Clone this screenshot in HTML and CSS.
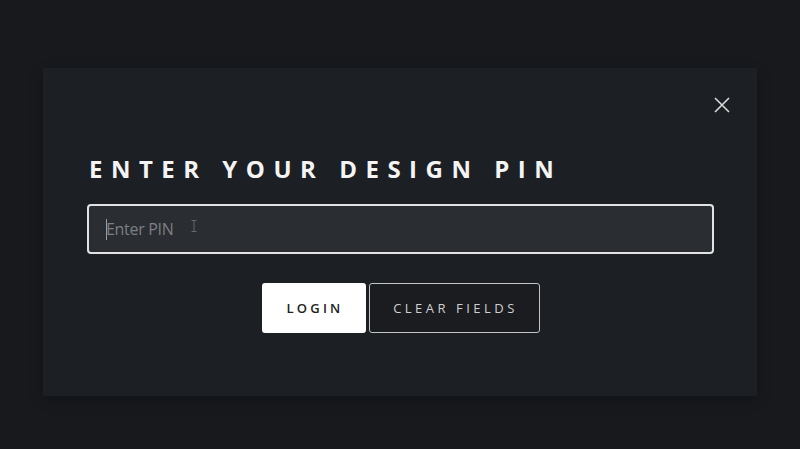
FILE: index.html
```html
<!DOCTYPE html>
<html lang="en">
<head>
<meta charset="UTF-8">
<meta name="viewport" content="width=device-width, initial-scale=1.0">
<title>Design PIN</title>
<link rel="stylesheet" href="styles.css">
</head>
<body>
<div class="modal">
  <button class="close" aria-label="Close">
    <svg width="16" height="16" viewBox="0 0 16 16"><path d="M1 1L15 15M15 1L1 15" stroke="#d8d8d8" stroke-width="1.6" fill="none"/></svg>
  </button>
  <h1>Enter your design PIN</h1>
  <div class="field">
    <span class="caret"></span>
    <input type="text" placeholder="Enter PIN">
    <svg class="ibeam" width="6" height="12" viewBox="0 0 6 12"><path d="M0.5 0.5H5.5M3 0.5V11.5M0.5 11.5H5.5" stroke="#666" stroke-width="1" fill="none"/></svg>
  </div>
  <div class="actions">
    <button class="btn primary">Login</button>
    <button class="btn ghost">Clear fields</button>
  </div>
</div>
</body>
</html>
```

FILE: styles.css
```css
body {
  margin: 0;
  background-color: #17191d;
  font-family: "Open Sans", "Liberation Sans", sans-serif;
  height: 449px;
  overflow: hidden;
}
.modal {
  position: relative;
  box-sizing: border-box;
  width: 714px;
  height: 328px;
  margin: 68px 0 0 43px;
  padding: 86px 43px 0 44px;
  background-color: #1c1f23;
  box-shadow: 0 4px 12px rgba(0, 0, 0, 0.25);
}
.close {
  position: absolute;
  top: 29px;
  right: 27px;
  padding: 0;
  border: none;
  background: none;
  width: 16px;
  height: 16px;
  cursor: pointer;
}
.close svg { display: block; }
h1 {
  margin: 0 0 0 2px;
  font-size: 24px;
  line-height: 30px;
  font-weight: 700;
  letter-spacing: 8.5px;
  text-transform: uppercase;
  color: #f4f4f4;
}
.field {
  position: relative;
  margin-top: 20px;
}
.field input {
  display: block;
  box-sizing: border-box;
  width: 100%;
  height: 50px;
  padding: 0 17px;
  font-family: inherit;
  font-size: 16px;
  color: #ddd;
  background-color: #2a2d31;
  border: 2px solid #e2e2e2;
  border-radius: 4px;
  outline: none;
}
.field input::placeholder {
  color: #7c7f84;
  letter-spacing: -0.3px;
}
.caret {
  position: absolute;
  left: 19px;
  top: 15px;
  width: 1px;
  height: 21px;
  background-color: #9a9ca0;
}
.ibeam {
  position: absolute;
  left: 104px;
  top: 16px;
}
.actions {
  display: flex;
  justify-content: center;
  gap: 3px;
  margin-top: 29px;
}
.btn {
  box-sizing: border-box;
  height: 50px;
  font-family: inherit;
  font-size: 13px;
  font-weight: 600;
  letter-spacing: 3.2px;
  text-transform: uppercase;
  border-radius: 3px;
  cursor: pointer;
}
.primary {
  width: 104px;
  padding: 0 0 0 3px;
  background-color: #ffffff;
  color: #222;
  border: none;
}
.ghost {
  width: 171px;
  padding: 0 0 0 3px;
  background-color: #1a1c20;
  color: #cfd0d2;
  border: 1.5px solid #c2c3c5;
  font-weight: 400;
  letter-spacing: 3.5px;
}
```
